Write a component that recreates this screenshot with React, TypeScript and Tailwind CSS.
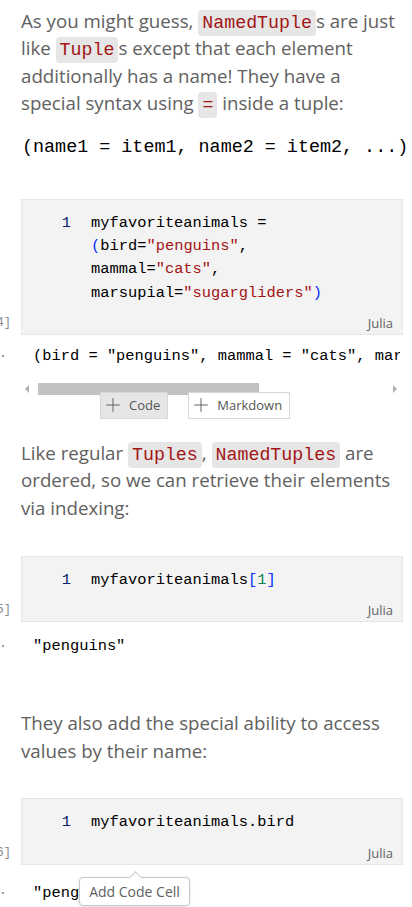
import React from 'react';
import { Plus } from 'lucide-react';

const sans = "font-['Open_Sans',_'Noto_Sans',_sans-serif]";
const mono = "font-['Liberation_Mono',_'DejaVu_Sans_Mono',_monospace]";

// chip de código en línea dentro del markdown
const Chip: React.FC<{ children: React.ReactNode }> = ({ children }) => (
  <code className={`${mono} text-[18.3px] leading-none text-[#a31515] bg-[#e6e6e6] rounded-[4px] px-[4px] py-[3px]`}>
    {children}
  </code>
);

const Str: React.FC<{ children: React.ReactNode }> = ({ children }) => (
  <span className="text-[#a31515]">{children}</span>
);
const Br: React.FC<{ children: React.ReactNode }> = ({ children }) => (
  <span className="text-[#0431fa]">{children}</span>
);

const CodeCell: React.FC<{ label: string; lines: React.ReactNode[] }> = ({ label, lines }) => (
  <div className="flex">
    <div className="w-[21px] shrink-0 flex flex-col justify-end overflow-hidden">
      <div className={`${mono} flex justify-end pr-[10px] text-[12px] leading-[20px] mb-[2px] text-[#8a8a8a] whitespace-nowrap`}>
        {label}
      </div>
    </div>
    <div className="w-[382px] bg-[#f3f3f3] border border-[#e6e6e6] pt-[12px] pb-[1px]">
      <div className="flex">
        <div className={`${mono} w-[49px] shrink-0 text-right text-[15.4px] leading-[23.33px] text-[#0b216f]`}>1</div>
        <div className={`${mono} ml-[20px] text-[15.4px] leading-[23.33px] text-black`}>
          {lines.map((l, i) => (
            <div key={i} className="whitespace-pre">{l}</div>
          ))}
        </div>
      </div>
      <div className={`${sans} mt-[8px] text-right pr-[9px] text-[13px] leading-[20px] text-[#616161]`}>Julia</div>
    </div>
  </div>
);

const Output: React.FC<{ children: React.ReactNode; className?: string }> = ({ children, className }) => (
  <div className={`flex ${className ?? ''}`}>
    <div className="w-[21px] shrink-0 text-[#777] text-[14px] leading-[22px] pl-[1px]">·</div>
    <div className={`${mono} w-[379px] overflow-hidden whitespace-pre text-[15.4px] leading-[22px] text-black pl-[12px]`}>
      {children}
    </div>
  </div>
);

const Para: React.FC<{ children: React.ReactNode; className?: string }> = ({ children, className }) => (
  <p className={`${sans} pl-[21px] pr-[12px] text-[18.7px] leading-[27.4px] text-[#616161] ${className ?? ''}`}>
    {children}
  </p>
);

const InsertButton: React.FC<{ label: string; active?: boolean }> = ({ label, active }) => (
  <div
    className={`${sans} flex items-center gap-[5px] h-[27px] pl-[1px] pr-[7px] border border-[#d6d6d6] text-[13px] text-[#555] ${
      active ? 'bg-[#e6e6e6]' : 'bg-white'
    }`}
  >
    <Plus className="w-[22px] h-[22px] text-[#555]" strokeWidth={1} />
    {label}
  </div>
);

export default function App() {
  return (
    <div className="relative w-[412px] h-[907px] overflow-hidden bg-white">
      <Para className="mt-[7px]">
        As you might guess, <Chip>NamedTuple</Chip>s are just like <Chip>Tuple</Chip>s except that each element
        additionally has a name! They have a special syntax using <Chip>=</Chip> inside a tuple:
      </Para>

      <div className={`${mono} pl-[22px] mt-[19px] text-[18.4px] leading-[24px] text-black whitespace-pre`}>
        (name1 = item1, name2 = item2, ...)
      </div>

      <div className="mt-[39px]">
        <CodeCell
          label="[4]"
          lines={[
            'myfavoriteanimals =',
            <>
              <Br>(</Br>bird=<Str>"penguins"</Str>,
            </>,
            <>
              mammal=<Str>"cats"</Str>,
            </>,
            <>
              marsupial=<Str>"sugargliders"</Str>
              <Br>)</Br>
            </>,
          ]}
        />
      </div>

      <Output className="mt-[10px]">(bird = "penguins", mammal = "cats", marsupial = "sugargliders")</Output>

      {/* barra de scroll horizontal + toolbar para insertar celdas */}
      <div className="relative mt-[16px] ml-[21px] w-[382px] h-[12px] flex items-center">
        <div className="w-[12px] flex justify-center">
          <div className="border-y-[4px] border-y-transparent border-r-[4px] border-r-[#b0b0b0]" />
        </div>
        <div className="h-[12px] w-[221px] bg-[#c1c1c1] ml-[5px]" />
        <div className="flex-1" />
        <div className="w-[12px] flex justify-center mr-[2px]">
          <div className="border-y-[4px] border-y-transparent border-l-[4px] border-l-[#b0b0b0]" />
        </div>
        <div className="absolute left-[79px] top-[9px] flex gap-[20px]">
          <InsertButton label="Code" active />
          <InsertButton label="Markdown" />
        </div>
      </div>

      <Para className="mt-[44px]">
        Like regular <Chip>Tuples</Chip>, <Chip>NamedTuples</Chip> are ordered, so we can retrieve their elements
        via indexing:
      </Para>

      <div className="mt-[35px]">
        <CodeCell
          label="[5]"
          lines={[
            <>
              myfavoriteanimals<Br>[</Br>
              <span className="text-[#098658]">1</span>
              <Br>]</Br>
            </>,
          ]}
        />
      </div>

      <Output className="mt-[13px]">"penguins"</Output>

      <Para className="mt-[52px]">They also add the special ability to access values by their name:</Para>

      <div className="mt-[34px]">
        <CodeCell label="[6]" lines={['myfavoriteanimals.bird']} />
      </div>

      <div className="relative">
        <Output className="mt-[17px]">"penguins"</Output>
        {/* tooltip */}
        <div className="absolute left-[79px] top-[-5px] w-[111px] h-[29px] bg-white border border-[#c8c8c8] rounded-[4px] shadow-[0_1px_3px_rgba(0,0,0,0.12)] flex items-center justify-center">
          <div className="absolute -top-[5px] left-[51px] w-[9px] h-[9px] rotate-45 bg-white border-l border-t border-[#c8c8c8]" />
          <span className={`${sans} relative text-[14px] text-[#616161]`}>Add Code Cell</span>
        </div>
      </div>
    </div>
  );
}
